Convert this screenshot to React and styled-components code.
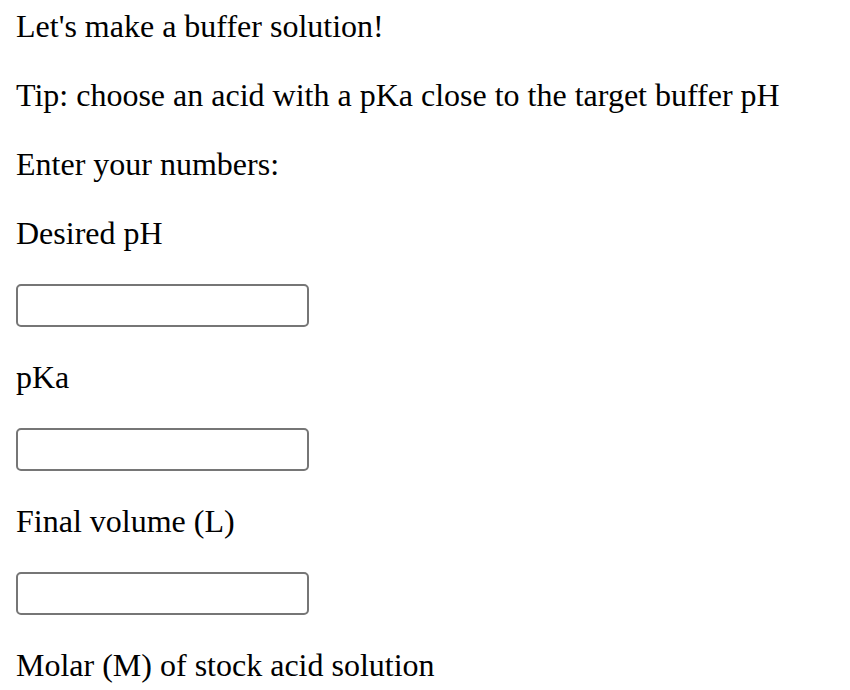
import React from "react";
import styled, { createGlobalStyle } from "styled-components";

const GlobalStyle = createGlobalStyle`
  html, body {
    margin: 0;
    padding: 0;
    background: #ffffff;
  }
  body {
    font-family: "Liberation Serif", "Times New Roman", serif;
    color: #000000;
  }
`;

const Page = styled.main`
  display: flex;
  flex-direction: column;
  align-items: flex-start;
  gap: 32px;
  padding: 8px 16px;
`;

const Text = styled.p`
  margin: 0;
  font-size: 32px;
  line-height: 37px;
`;

const NumberInput = styled.input`
  box-sizing: border-box;
  width: 293px;
  height: 43px;
  margin: 0;
  padding: 2px 6px;
  border: 2px solid #767676;
  border-radius: 5px;
  background: #ffffff;
  font-family: "Liberation Sans", Arial, sans-serif;
  font-size: 26px;
  outline: none;
`;

const fields = [
  { id: "ph", label: "Desired pH" },
  { id: "pka", label: "pKa" },
  { id: "volume", label: "Final volume (L)" },
  { id: "molar", label: "Molar (M) of stock acid solution" },
];

const App = () => {
  return (
    <>
      <GlobalStyle />
      <Page>
        <Text>Let's make a buffer solution!</Text>
        <Text>Tip: choose an acid with a pKa close to the target buffer pH</Text>
        <Text>Enter your numbers:</Text>
        {fields.map((f) => (
          <React.Fragment key={f.id}>
            <Text as="label" htmlFor={f.id}>
              {f.label}
            </Text>
            <NumberInput id={f.id} type="text" />
          </React.Fragment>
        ))}
      </Page>
    </>
  );
};

export default App;
